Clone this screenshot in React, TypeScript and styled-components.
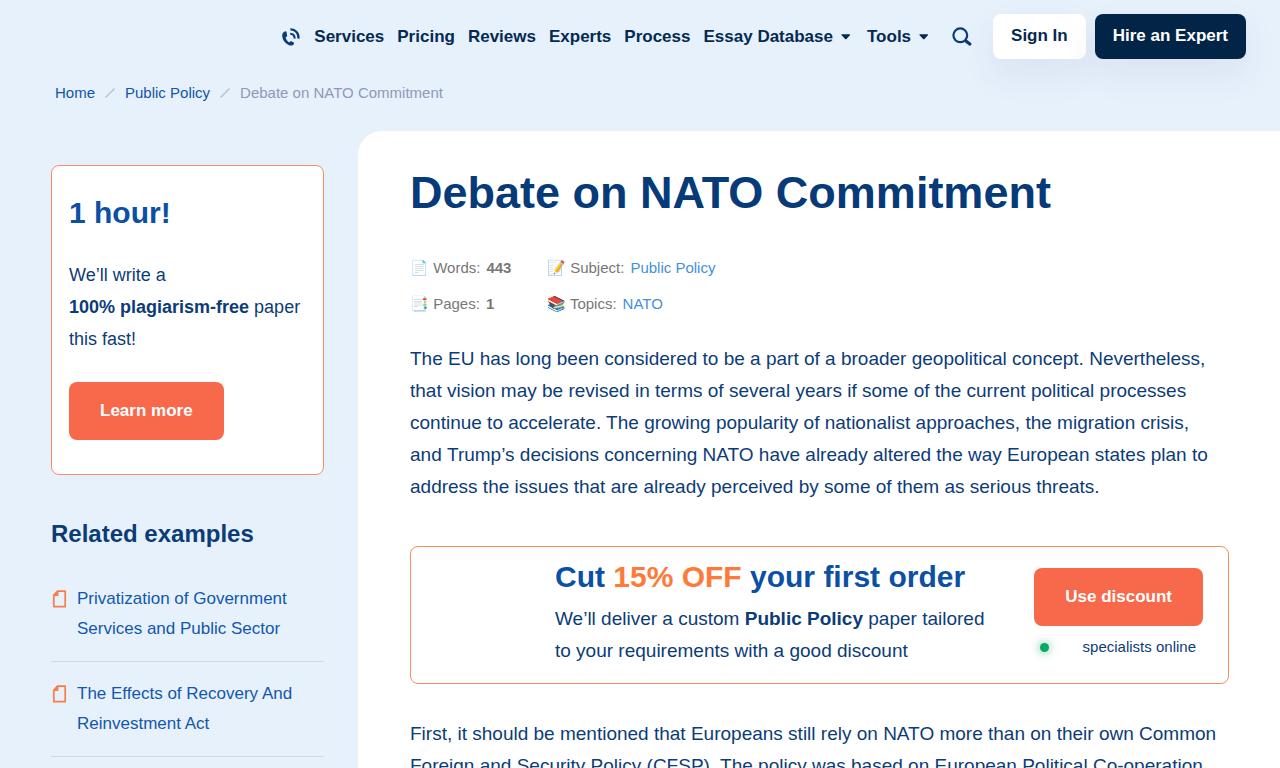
import React from "react";
import styled, { createGlobalStyle } from "styled-components";

const GlobalStyle = createGlobalStyle`
  * { box-sizing: border-box; }
  body {
    margin: 0;
    background: #e7f1fc;
    color: #0c3c78;
    font: 19px/32px "Liberation Sans", Arial, sans-serif;
  }
  a { color: inherit; text-decoration: none; }
  h1, h2, p, ul, ol, dl, dd { margin: 0; padding: 0; }
  ul, ol { list-style: none; }
`;

const Page = styled.div`
  height: 100vh;
  overflow: hidden;
`;

const Header = styled.header`
  display: flex;
  justify-content: flex-end;
  align-items: center;
  padding: 14px 34px 14px 50px;
`;

const Nav = styled.nav`
  display: flex;
  align-items: center;
  gap: 13px;
  color: #042a52;
  font-size: 17px;
  font-weight: 700;
  line-height: 20px;
`;

const NavLink = styled.a`
  display: flex;
  align-items: center;
  gap: 8px;
  white-space: nowrap;
`;

const IconButton = styled.button`
  display: flex;
  border: 0;
  padding: 0;
  margin: 0 21px 0 20px;
  background: none;
  color: #0c3c78;
`;

const Button = styled.button<{ $kind: "light" | "dark" }>`
  height: 45px;
  border: 0;
  border-radius: 8px;
  padding: 0 18px 1px;
  margin-left: ${(p) => (p.$kind === "dark" ? "9px" : "0")};
  background: ${(p) => (p.$kind === "dark" ? "#022447" : "#fff")};
  color: ${(p) => (p.$kind === "dark" ? "#fff" : "#042a52")};
  font: 700 17px/20px "Liberation Sans", Arial, sans-serif;
  white-space: nowrap;
  box-shadow: 0 15px 35px rgba(60, 60, 120, 0.08);
`;

const Crumbs = styled.ol`
  display: flex;
  align-items: center;
  gap: 10px;
  padding: 10px 55px 28px;
  font-size: 15px;
  line-height: 20px;
  color: #9297b8;

  a { color: #1055aa; }
  li { display: flex; align-items: center; gap: 10px; }
`;

const Columns = styled.div`
  display: grid;
  grid-template-columns: 358px minmax(0, 1fr);
`;

const Sidebar = styled.aside`
  padding: 34px 34px 0 51px;
`;

const Promo = styled.section`
  border: 1px solid #f58e62;
  border-radius: 8px;
  padding: 28px 17px 34px;
  background: #fff;
`;

const PromoTitle = styled.h2`
  margin-bottom: 27px;
  color: #0b50a5;
  font-size: 30px;
  line-height: 38px;
`;

const ActionButton = styled.button`
  display: block;
  height: 58px;
  border: 0;
  border-radius: 8px;
  padding: 0 31px 1px;
  background: #f8694b;
  color: #fff;
  font: 700 17px/20px "Liberation Sans", Arial, sans-serif;
  white-space: nowrap;
`;

const PromoText = styled.p`
  margin-bottom: 27px;
  font-size: 18px;
`;

const SideTitle = styled.h2`
  margin: 43px 0 34px;
  font-size: 24px;
  line-height: 32px;
`;

const RelatedItem = styled.li`
  display: flex;
  gap: 10px;
  margin-bottom: 17px;
  border-bottom: 1px solid #ced9e6;
  padding: 0 0 17px 1px;
  color: #1257ac;
  font-size: 17px;
  line-height: 30px;

  svg { flex: none; margin-top: 6px; }
`;

const Main = styled.main`
  border-top-left-radius: 24px;
  padding: 34px 51px 0 52px;
  background: #fff;
`;

const Title = styled.h1`
  margin-bottom: 37px;
  color: #063a78;
  font-size: 45px;
  line-height: 56px;
`;

const Meta = styled.dl`
  display: grid;
  grid-template-columns: 137px 1fr;
  row-gap: 16px;
  margin-bottom: 29px;
  font-size: 15px;
  line-height: 20px;
  color: #777;
`;

const MetaEntry = styled.div`
  display: flex;
  gap: 6px;
  white-space: pre;

  a { color: #4590dc; }
`;

const Discount = styled.section`
  display: flex;
  margin: 43px 0 34px;
  border: 1px solid #f58e62;
  border-radius: 8px;
  padding: 10px 25px 16px 144px;
`;

const DiscountText = styled.div`
  flex: 1;
`;

const DiscountTitle = styled.h2`
  margin-bottom: 6px;
  color: #0b50a5;
  font-size: 30px;
  line-height: 40px;

  span { color: #ff7a38; }
`;

const DiscountAction = styled.div`
  padding-top: 11px;
`;

const Online = styled.div`
  display: flex;
  align-items: center;
  justify-content: space-between;
  margin-top: 11px;
  padding: 0 7px 0 6px;
  font-size: 15px;
  line-height: 20px;
`;

const Dot = styled.span`
  width: 9px;
  height: 9px;
  border-radius: 50%;
  background: #08a866;
  box-shadow: 0 0 8px 1px rgba(8, 168, 102, 0.5);
`;

const PhoneIcon = () => (
  <svg width="20" height="20" viewBox="0 0 20 20" fill="none" stroke="#0c3c78">
    <path
      fill="#0c3c78"
      stroke="none"
      d="M4.2 4.2C2.4 4.9 1.2 6.3 1.2 8.4c0 2.4 1.1 5 3 7 1.9 2 4.5 3.3 6.7 3.1 1.2-.1 1.9-.9 2.1-1.9.1-.6-.1-1-.6-1.3l-2.1-1c-.5-.2-.9-.1-1.3.3l-.7.8c-1.9-1-3.4-3-3.7-5.1l1-.6c.4-.3.6-.6.5-1.1l-.6-3.4c-.1-.7-.6-1.2-1.3-1z"
    />
    <path d="M9.4 2.4c4.9-.2 8.6 4 8.1 9.2" strokeWidth="2.2" />
    <path d="M9.2 6.7c2.7-.1 4.7 2 4.4 4.9" strokeWidth="2.1" />
  </svg>
);

const SearchIcon = () => (
  <svg width="20" height="20" viewBox="0 0 20 20" fill="none" stroke="currentColor">
    <circle cx="8.3" cy="8.3" r="6.9" strokeWidth="2.2" />
    <path d="M13 13.1 14.6 14.4" strokeWidth="2.6" />
    <path d="m14.2 14.2 3.6 2.9" strokeWidth="3.2" strokeLinecap="round" />
  </svg>
);

const Caret = () => (
  <svg width="13" height="7" viewBox="0 0 13 7" fill="#042a52" aria-hidden="true">
    <path d="M1 1.2h7.4c.7 0 .9.7.5 1.1L5.5 5.9c-.4.4-1 .4-1.4 0L.6 2.3C.2 1.9.3 1.2 1 1.2z" />
  </svg>
);

const PageIcon = () => (
  <svg width="15" height="18" viewBox="0 0 15 18" fill="none" stroke="#f97c45" strokeWidth="1.7" strokeLinejoin="round">
    <path d="M5.6 1.2h7.6v15.5H1.8V5.2L5.6 1.2v4H1.8" />
  </svg>
);

const Slash = () => (
  <svg width="10" height="10" viewBox="0 0 10 10" stroke="#b6bfcd" strokeWidth="1.2" aria-hidden="true">
    <path d="M.5 9.5 9.5.5" />
  </svg>
);

const related = [
  ["Privatization of Government", "Services and Public Sector"],
  ["The Effects of Recovery And", "Reinvestment Act"],
];

export default function App() {
  return (
    <Page>
      <GlobalStyle />
      <Header>
        <Nav>
          <NavLink href="#call" aria-label="Call us"><PhoneIcon /></NavLink>
          <NavLink href="#services">Services</NavLink>
          <NavLink href="#pricing">Pricing</NavLink>
          <NavLink href="#reviews">Reviews</NavLink>
          <NavLink href="#experts">Experts</NavLink>
          <NavLink href="#process">Process</NavLink>
          <NavLink href="#database">Essay Database <Caret /></NavLink>
          <NavLink href="#tools">Tools <Caret /></NavLink>
        </Nav>
        <IconButton aria-label="Search"><SearchIcon /></IconButton>
        <Button $kind="light">Sign In</Button>
        <Button $kind="dark">Hire an Expert</Button>
      </Header>
      <Crumbs>
        <li><a href="#home">Home</a><Slash /></li>
        <li><a href="#policy">Public Policy</a><Slash /></li>
        <li>Debate on NATO Commitment</li>
      </Crumbs>
      <Columns>
        <Sidebar>
          <Promo>
            <PromoTitle>1 hour!</PromoTitle>
            <PromoText>
              We’ll write a<br />
              <strong>100% plagiarism-free</strong> paper<br />
              this fast!
            </PromoText>
            <ActionButton>Learn more</ActionButton>
          </Promo>
          <SideTitle>Related examples</SideTitle>
          <ul>
            {related.map(([first, second]) => (
              <RelatedItem key={first}>
                <PageIcon />
                <a href="#example">{first}<br />{second}</a>
              </RelatedItem>
            ))}
          </ul>
        </Sidebar>
        <Main>
          <Title>Debate on NATO Commitment</Title>
          <Meta>
            <MetaEntry><dt>📄 Words:</dt><dd><strong>443</strong></dd></MetaEntry>
            <MetaEntry><dt>📝 Subject:</dt><dd><a href="#policy">Public Policy</a></dd></MetaEntry>
            <MetaEntry><dt>📑 Pages:</dt><dd><strong>1</strong></dd></MetaEntry>
            <MetaEntry><dt>📚 Topics:</dt><dd><a href="#nato">NATO</a></dd></MetaEntry>
          </Meta>
          <p>
            The EU has long been considered to be a part of a broader geopolitical concept. Nevertheless,
            that vision may be revised in terms of several years if some of the current political processes
            continue to accelerate. The growing popularity of nationalist approaches, the migration crisis,
            and&nbsp;Trump’s decisions concerning NATO have already altered the way European states plan to
            address the issues that are already perceived by some of them as serious threats.
          </p>
          <Discount>
            <DiscountText>
              <DiscountTitle>Cut <span>15% OFF</span> your first order</DiscountTitle>
              <p>
                We’ll deliver a custom <strong>Public Policy</strong> paper tailored<br />
                to your requirements with a good discount
              </p>
            </DiscountText>
            <DiscountAction>
              <ActionButton>Use discount</ActionButton>
              <Online><Dot />specialists online</Online>
            </DiscountAction>
          </Discount>
          <p>
            First, it should be mentioned that Europeans still rely on NATO more than on their own Common
            Foreign and Security Policy (CFSP). The policy was based on European Political Co-operation
          </p>
        </Main>
      </Columns>
    </Page>
  );
}
